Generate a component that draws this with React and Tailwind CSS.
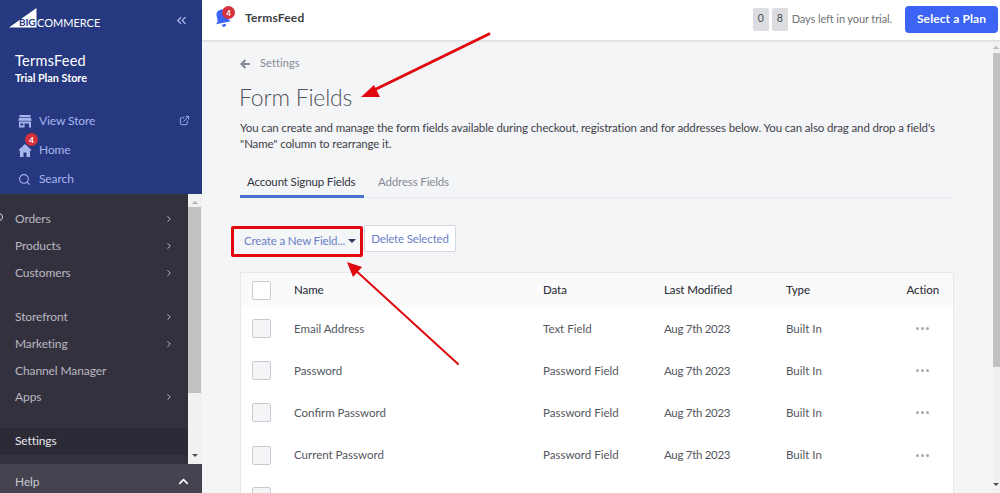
import { ChevronRight, ChevronUp, ChevronsLeft, ExternalLink, Search } from 'lucide-react';

const fields = [
  { name: 'Email Address', data: 'Text Field' },
  { name: 'Password', data: 'Password Field' },
  { name: 'Confirm Password', data: 'Password Field' },
  { name: 'Current Password', data: 'Password Field' },
];

const Badge = ({ className }) => (
  <span className={`absolute flex h-[13px] w-[13px] items-center justify-center rounded-full bg-[#d5303e] text-[8px] font-bold text-white ${className}`}>
    4
  </span>
);

const NavItem = ({ label, arrow }) => (
  <div className="flex h-[26.7px] items-center justify-between pl-[15px] pr-[14px] text-[12px] tracking-[-0.1px] text-[#b9b8c0]">
    <span>{label}</span>
    {arrow && <ChevronRight size={10} strokeWidth={2} className="text-[#d5d5da]" />}
  </div>
);

const Sidebar = () => (
  <aside className="flex w-[202px] shrink-0 flex-col bg-[#26387f]">
    <div className="h-[194px] pr-px">
      <div className="flex items-start justify-between pl-[9px] pr-[12px] pt-2">
        <div className="relative flex h-[20px] w-[95px] items-start">
          <svg width="28" height="20" viewBox="0 0 28 20" className="shrink-0">
            <path d="M0 19.5 27.5 0v19.5z" fill="#fff" />
          </svg>
          <span className="absolute left-[10px] top-[9px] text-[10px] font-bold leading-[11px] tracking-[-0.2px] text-[#26387f]">BIG</span>
          <span className="absolute left-[28px] top-[8px] text-[11px] leading-[13px] text-white">COMMERCE</span>
        </div>
        <ChevronsLeft size={15} strokeWidth={1.8} className="mt-[5px] text-[#b6c4f3]" />
      </div>
      <div className="pl-[15px] pt-[23px]">
        <div className="text-[14.5px] leading-[20px] tracking-[0.25px] text-white">TermsFeed</div>
        <div className="text-[10.8px] font-bold leading-[14px] text-white">Trial Plan Store</div>
      </div>
      <div className="mt-[21px] pl-[18px] pr-[11px] text-[12px] tracking-[-0.1px] text-[#a6b6ee]">
        <div className="flex h-[29px] items-center">
          <svg width="14" height="14" viewBox="0 0 14 14" fill="#a6b6ee" className="mr-[7px]">
            <path d="M1.5 1h11v2h-11zM1 3.8h12l.6 3H.4zM1 7.6h12V13.500h-2V9.500H6.500v4H1zM2.500 9.500h2.800v2H2.500z" fillRule="evenodd" />
          </svg>
          <span className="flex-1">View Store</span>
          <ExternalLink size={11} strokeWidth={2} />
        </div>
        <div className="relative flex h-[30px] items-center">
          <svg width="14" height="13" viewBox="0 0 14 13" fill="#a6b6ee" className="mr-[7px]">
            <path d="M7 0 0 6.500h2V13h3.500V8.500h3V13H12V6.500h2z" />
          </svg>
          <Badge className="left-[7px] top-[-2px]" />
          <span>Home</span>
        </div>
        <div className="flex h-[28px] items-center">
          <Search size={13} strokeWidth={2} className="mr-[8px]" />
          <span>Search</span>
        </div>
      </div>
    </div>
    <div className="relative flex h-[270px] bg-[#34313f]">
      <span className="absolute left-[-5px] top-[19px] h-[8px] w-[8px] rounded-full border border-[#d8d8dc]" />
      <nav className="flex-1 pt-[12px]">
        <NavItem label="Orders" arrow />
        <NavItem label="Products" arrow />
        <NavItem label="Customers" arrow />
        <div className="h-[18px]" />
        <NavItem label="Storefront" arrow />
        <NavItem label="Marketing" arrow />
        <NavItem label="Channel Manager" />
        <NavItem label="Apps" arrow />
        <div className="mt-[17px] flex h-[27px] items-center bg-[#2c2a36] pl-[15px] text-[12px] tracking-[-0.1px] text-[#e6e6ea]">Settings</div>
      </nav>
      <div className="flex w-[14px] flex-col items-center bg-[#f1f1f1] pr-px">
        <span className="mt-[7px] h-0 w-0 border-x-[3px] border-b-[3px] border-x-transparent border-b-[#b5b5b5]" />
        <span className="mt-[3px] h-[186px] w-full bg-[#c1c1c1]" />
        <span className="mt-auto mb-[7px] h-0 w-0 border-x-[3px] border-t-[3px] border-x-transparent border-t-[#505050]" />
      </div>
    </div>
    <div className="flex h-[29px] items-center justify-between bg-[#45434f] pl-[15px] pr-[11px] pt-[6px] text-[12px] tracking-[-0.1px] text-[#c9c8cf]">
      <span>Help</span>
      <ChevronUp size={15} strokeWidth={2.5} className="text-white" />
    </div>
  </aside>
);

const Topbar = () => (
  <header className="relative z-10 flex h-[40px] shrink-0 items-center bg-white pl-[12px] pr-[2px] shadow-[0_1px_2px_rgba(0,0,0,0.12)]">
    <div className="relative mr-[15px] h-[26px] w-[16px] -translate-y-[3px]">
      <svg width="17" height="20" viewBox="0 0 16 18" fill="#3c64f4" className="absolute left-0 top-[4px] rotate-[-12deg]">
        <path d="M8 1c3 0 5 2 5 5v5l2 2.500H1L3 11V6c0-3 2-5 5-5zM6 15h4c0 1.500-.8 2.500-2 2.500S6 16.500 6 15z" />
      </svg>
      <Badge className="left-[8px] top-[2px]" />
    </div>
    <span className="flex-1 -translate-y-[2px] text-[12px] font-bold tracking-[0.2px] text-[#3c4043]">TermsFeed</span>
    <div className="flex -translate-y-[1px] items-center">
      <span className="flex h-[23px] w-[16px] items-center justify-center rounded-[2px] bg-[#dcdde0] text-[10.5px] text-[#4a4d52]">0</span>
      <span className="ml-[3px] flex h-[23px] w-[16px] items-center justify-center rounded-[2px] bg-[#dcdde0] text-[10.5px] text-[#4a4d52]">8</span>
      <span className="ml-[4px] text-[11px] tracking-[-0.1px] text-[#6f7278]">Days left in your trial.</span>
      <button className="ml-[13px] h-[27px] w-[93px] rounded-[4px] bg-[#3c64f4] text-[12px] font-bold tracking-[0.1px] text-white">Select a Plan</button>
    </div>
  </header>
);

const Checkbox = ({ className }) => (
  <span className={`block h-[19px] w-[19px] rounded-[2px] border border-[#c8cbd1] ${className}`} />
);

const Table = () => (
  <div className="border border-[#e6e8ec] bg-white">
    <div className="grid h-[34px] grid-cols-[53px_249px_121px_122px_1fr] items-center bg-[#fafafa] text-[11.5px] font-medium tracking-[-0.1px] text-[#313440]">
      <div className="pl-[11px]"><Checkbox className="bg-white" /></div>
      <div>Name</div>
      <div>Data</div>
      <div>Last Modified</div>
      <div className="flex justify-between pr-[14px]"><span>Type</span><span>Action</span></div>
    </div>
    {fields.map((field) => (
      <div key={field.name} className="grid h-[42.3px] grid-cols-[53px_249px_121px_122px_1fr] items-center text-[11.5px] text-[#53565e]">
        <div className="pl-[11px]"><Checkbox className="bg-[#f4f5f7]" /></div>
        <div>{field.name}</div>
        <div>{field.data}</div>
        <div className="tracking-[-0.3px]">Aug 7th 2023</div>
        <div className="flex items-center justify-between pr-[24px]">
          <span>Built In</span>
          <span className="flex gap-[2px]">
            <i className="h-[3px] w-[3px] rounded-full bg-[#a8aab0]" />
            <i className="h-[3px] w-[3px] rounded-full bg-[#a8aab0]" />
            <i className="h-[3px] w-[3px] rounded-full bg-[#a8aab0]" />
          </span>
        </div>
      </div>
    ))}
    <div className="h-[42px] pl-[11px] pt-[11px]"><Checkbox className="bg-[#f4f5f7]" /></div>
  </div>
);

const Arrows = () => (
  <svg className="pointer-events-none absolute left-0 top-0 z-20" width="1000" height="493" viewBox="0 0 1000 493" fill="#e0080f" stroke="#e0080f">
    <path d="M489 34 370 92" strokeWidth="3" strokeLinecap="round" />
    <path d="M361 97 374 85 380 97z" strokeWidth="0" />
    <path d="M458 364 353 268" strokeWidth="2" strokeLinecap="round" />
    <path d="M347 262 362 267 353 277z" strokeWidth="0" />
  </svg>
);

const App = () => (
  <div className="relative flex h-[493px] w-[1000px] overflow-hidden bg-[#f4f5f7] font-['Lato',sans-serif]">
    <Sidebar />
    <div className="flex min-w-0 flex-1 flex-col">
      <Topbar />
      <div className="flex min-h-0 flex-1">
        <main className="min-w-0 flex-1 pl-[38px] pr-[39px] pt-[17px]">
          <div className="flex h-[13px] items-center text-[11px] tracking-[0.1px] text-[#868a94]">
            <svg width="10" height="10" viewBox="0 0 10 10" fill="none" stroke="#868a94" strokeWidth="2.2" className="mr-[10px]">
              <path d="M10 5H2M5.500 1 1.500 5 5.500 9" />
            </svg>
            Settings
          </div>
          <h1 className="-ml-px mt-[11px] text-[23px] font-light leading-[32px] tracking-[-0.2px] text-[#50535a]">Form Fields</h1>
          <p className="mt-[7px] w-[715px] text-[11.5px] leading-[15.5px] tracking-[-0.13px] text-[#3f4249]">
            You can create and manage the form fields available during checkout, registration and for addresses below. You can also drag and drop a field's "Name" column to rearrange it.
          </p>
          <div className="mt-[14px] flex h-[33px] border-b border-[#e6e8ec] text-[11.5px] tracking-[-0.14px]">
            <span className="h-[33px] w-[124px] border-b-[3px] border-[#4b6fd0] pl-[7px] pt-[8px] text-[#313440]">Account Signup Fields</span>
            <span className="pl-[14px] pt-[8px] text-[#868a94]">Address Fields</span>
          </div>
          <div className="mb-[14px] mt-[27px] flex h-[33px] items-start text-[11.5px] tracking-[-0.14px] text-[#6b7fc9]">
            <button className="-ml-[9px] flex h-[31px] w-[132px] translate-y-[1px] items-center rounded-[2px] border-[3px] border-[#e2070f] pb-[2px] pl-[10px]">
              <span className="whitespace-nowrap">Create a New Field...</span>
              <span className="ml-[3px] h-0 w-0 border-x-[4px] border-t-[4px] border-x-transparent border-t-[#2f3a5e]" />
            </button>
            <button className="ml-px h-[27px] w-[92px] whitespace-nowrap rounded-[2px] border border-[#d4d8e0] bg-white">Delete Selected</button>
          </div>
          <Table />
        </main>
        <div className="flex w-[7px] shrink-0 flex-col bg-[#f1f1f1]">
          <span className="mt-[6px] h-0 w-0 border-x-[3px] border-b-[3px] border-x-transparent border-b-[#b5b5b5]" />
          <span className="mt-[4px] h-[314px] bg-[#c1c1c1]" />
          <span className="mb-[7px] mt-auto h-0 w-0 border-x-[3px] border-t-[3px] border-x-transparent border-t-[#505050]" />
        </div>
      </div>
    </div>
    <Arrows />
  </div>
);

export default App;
